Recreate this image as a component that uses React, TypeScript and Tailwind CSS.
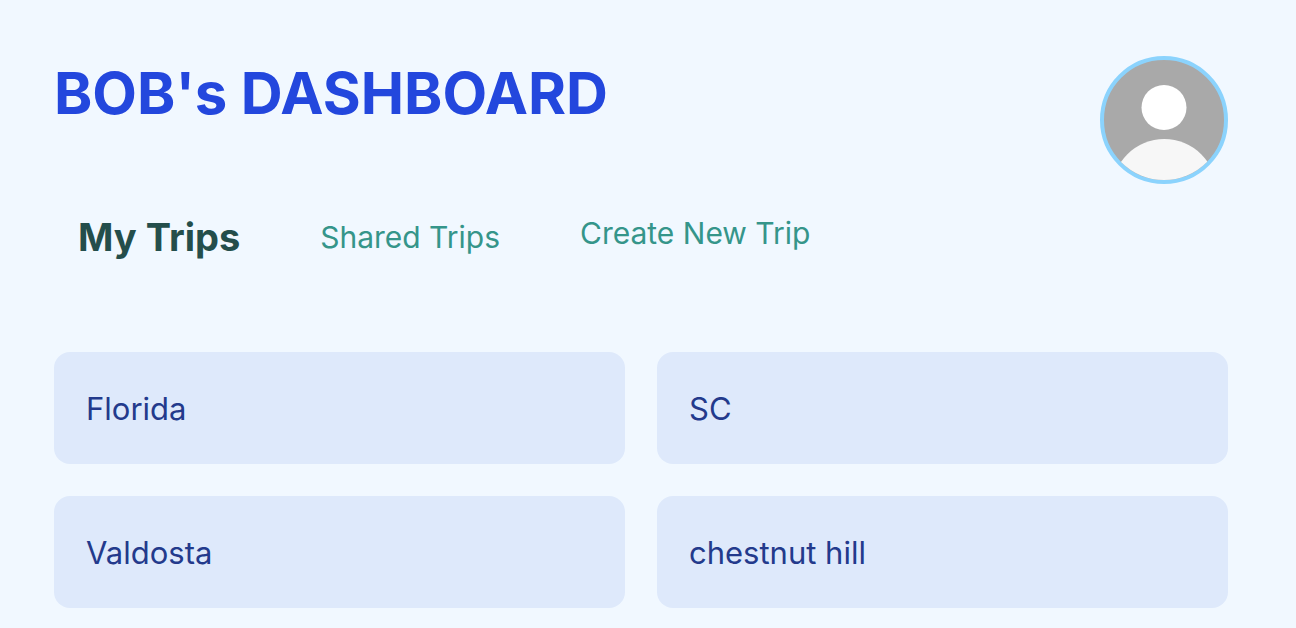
const trips = ["Florida", "SC", "Valdosta", "chestnut hill"];

function Avatar() {
  return (
    <button
      type="button"
      aria-label="Profile"
      className="size-32 shrink-0 overflow-hidden rounded-full border-4 border-[#8bd3fd] bg-[#a9a9a9]"
    >
      <svg viewBox="0 0 120 120" className="block size-full" aria-hidden="true">
        <circle cx="60" cy="47.5" r="22.5" fill="#ffffff" />
        <circle cx="60.3" cy="131.5" r="52.5" fill="#f7f7f7" />
      </svg>
    </button>
  );
}

export default function App() {
  return (
    <div className="min-h-screen bg-[#f1f8ff] pt-14 pr-[68px] pb-5 pl-[54px] font-['Inter',sans-serif]">
      <header className="flex items-start justify-between">
        <h1 className="text-[58px] leading-[74px] font-bold text-[#2347dd]">
          BOB's DASHBOARD
        </h1>
        <Avatar />
      </header>
      <nav className="mt-7 flex items-start gap-20 pl-6 text-[30px] leading-[42px] text-[#35958a]">
        <button type="button" className="pt-1 text-[38px] font-bold text-[#244e4b]">
          My Trips
        </button>
        <button type="button" className="pt-1">
          Shared Trips
        </button>
        <a href="#create">Create New Trip</a>
      </nav>
      <main className="mt-[94px] grid grid-cols-2 gap-8">
        {trips.map((trip) => (
          <a
            key={trip}
            href="#trip"
            className="rounded-2xl bg-[#dee9fb] px-8 pt-[33px] pb-[31px] text-[31px] leading-[48px] text-[#233a8c]"
          >
            {trip}
          </a>
        ))}
      </main>
    </div>
  );
}
